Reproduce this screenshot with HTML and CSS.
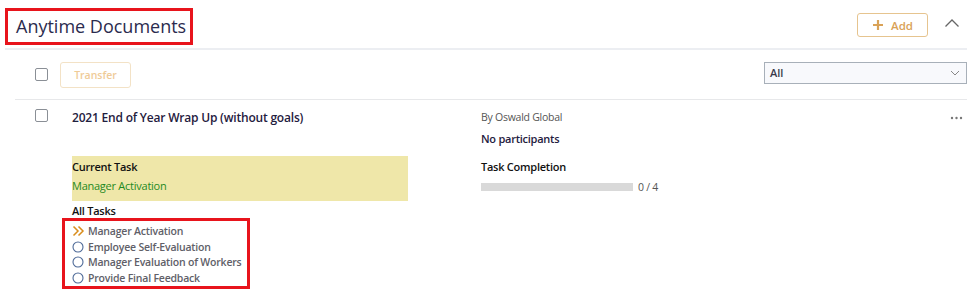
FILE: index.html
```html
<!DOCTYPE html>
<html lang="en">
<head>
<meta charset="utf-8">
<title>Anytime Documents</title>
<link rel="stylesheet" href="styles.css">
</head>
<body>
<div class="panel">
  <header class="panel-header">
    <h1 class="panel-title">Anytime Documents</h1>
    <div class="header-actions">
      <button class="btn-add" type="button">
        <svg class="plus" width="12" height="12" viewBox="0 0 12 12"><path d="M6 1v10M1 6h10" stroke="#d9a257" stroke-width="2.2"/></svg>
        <span>Add</span>
      </button>
      <svg class="collapse" width="16" height="10" viewBox="0 0 16 10"><path d="M1.5 8.5L8 2l6.5 6.5" fill="none" stroke="#666" stroke-width="1.3"/></svg>
    </div>
  </header>

  <div class="toolbar">
    <span class="checkbox"></span>
    <button class="btn-transfer" type="button" disabled>Transfer</button>
    <div class="select">
      <span>All</span>
      <svg width="10" height="6" viewBox="0 0 10 6"><path d="M1 1l4 4 4-4" fill="none" stroke="#888" stroke-width="1"/></svg>
    </div>
  </div>

  <div class="doc-row">
    <span class="checkbox row-check"></span>
    <div class="doc-grid">
      <div class="doc-title">2021 End of Year Wrap Up (without goals)</div>
      <div class="doc-meta">
        <div class="by">By Oswald Global</div>
        <div class="participants">No participants</div>
      </div>

      <div class="current-task">
        <div class="label">Current Task</div>
        <div class="task-name">Manager Activation</div>
      </div>
      <div class="completion">
        <div class="label">Task Completion</div>
        <div class="progress-line">
          <div class="progress"><div class="progress-fill" style="width:0%"></div></div>
          <span class="count">0 / 4</span>
        </div>
      </div>

      <div class="all-tasks">
        <div class="label all-label">All Tasks</div>
        <ul class="task-list">
          <li><svg class="ico" width="13" height="12" viewBox="0 0 13 12"><path d="M1.5 1.5L6 6l-4.5 4.5M6.5 1.5L11 6l-4.5 4.5" fill="none" stroke="#d98d1c" stroke-width="1.5"/></svg>Manager Activation</li>
          <li><svg class="ico" width="13" height="12" viewBox="0 0 13 12"><circle cx="6" cy="6" r="5" fill="none" stroke="#4e6a98" stroke-width="1.1"/></svg>Employee Self-Evaluation</li>
          <li><svg class="ico" width="13" height="12" viewBox="0 0 13 12"><circle cx="6" cy="6" r="5" fill="none" stroke="#4e6a98" stroke-width="1.1"/></svg>Manager Evaluation of Workers</li>
          <li><svg class="ico" width="13" height="12" viewBox="0 0 13 12"><circle cx="6" cy="6" r="5" fill="none" stroke="#4e6a98" stroke-width="1.1"/></svg>Provide Final Feedback</li>
        </ul>
      </div>
    </div>
    <svg class="more" width="13" height="4" viewBox="0 0 13 4"><circle cx="2" cy="2" r="1.2" fill="#777"/><circle cx="6.5" cy="2" r="1.2" fill="#777"/><circle cx="11" cy="2" r="1.2" fill="#777"/></svg>
  </div>
</div>
</body>
</html>
```

FILE: styles.css
```css
* { box-sizing: border-box; }
html, body { margin: 0; padding: 0; background: #fff; }
body {
  font-family: "Open Sans", "Noto Sans", sans-serif;
  color: #1f2040;
  width: 975px;
  height: 297px;
  overflow: hidden;
}
.panel { padding: 0 8px 0 5px; }

.panel-header {
  display: flex;
  align-items: flex-start;
  justify-content: space-between;
  height: 50px;
  border-bottom: 2px solid #eceef2;
}
.panel-title {
  margin: 8px 0 0 0;
  width: 188px;
  height: 37px;
  border: 3px solid #e8141c;
  padding-left: 8px;
  font-weight: 400;
  font-size: 18px;
  line-height: 30px;
  color: #2b2b4e;
  white-space: nowrap;
}
.header-actions {
  display: flex;
  align-items: center;
  margin-top: 13px;
  gap: 16px;
  padding-right: 7px;
}
.btn-add {
  display: flex;
  align-items: center;
  justify-content: center;
  gap: 7px;
  width: 71px;
  height: 24px;
  background: #fff;
  border: 1px solid #e6c48f;
  border-radius: 3px;
  color: #d9a257;
  font-family: inherit;
  font-weight: 600;
  font-size: 11.5px;
  padding: 0;
}
.collapse { display: block; margin-top: -4px; }

.toolbar {
  display: flex;
  align-items: center;
  height: 50px;
  margin-left: 10px;
  padding-left: 20px;
  border-bottom: 1px solid #e7e8ea;
}
.checkbox {
  display: inline-block;
  width: 13px;
  height: 13px;
  border: 1px solid #8a8f96;
  border-radius: 2px;
  background: #fff;
}
.btn-transfer {
  margin-left: 12px;
  width: 71px;
  height: 26px;
  background: #fff;
  border: 1px solid #f3e2c6;
  border-radius: 3px;
  color: #efcb98;
  font-family: inherit;
  font-weight: 600;
  font-size: 10.5px;
  padding: 0;
}
.select {
  margin-left: auto;
  width: 203px;
  height: 22px;
  display: flex;
  align-items: center;
  justify-content: space-between;
  padding: 0 6px 0 5px;
  border: 1px solid #a8b0b9;
  background: #f8f9fc;
  font-size: 11px;
  font-weight: 600;
  color: #3a3a4a;
  margin-top: -4px;
}

.doc-row {
  position: relative;
  display: flex;
  align-items: flex-start;
  margin-left: 10px;
  padding-left: 20px;
  padding-top: 9px;
}
.row-check { flex: none; }
.doc-grid {
  margin-left: 24px;
  display: grid;
  grid-template-columns: 409px 300px;
  font-size: 11px;
  letter-spacing: -0.25px;
}
.doc-title {
  font-size: 12px;
  font-weight: 600;
  line-height: 18px;
  color: #1f2040;
  letter-spacing: -0.2px;
}
.doc-meta { line-height: 16px; }
.by { color: #555; font-size: 10.5px; }
.participants { margin-top: 6px; font-weight: 600; color: #1f2040; }

.label { font-weight: 600; color: #111; line-height: 16px; }
.current-task {
  margin-top: 9px;
  width: 336px;
  height: 45px;
  background: #efe7a9;
  padding-top: 3px;
}
.task-name { margin-top: 3px; color: #1f8a1f; line-height: 16px; font-weight: 400; }
.completion { margin-top: 12px; }
.progress-line { display: flex; align-items: center; gap: 5px; margin-top: 6px; }
.progress { width: 152px; height: 8px; background: #d9d9d9; }
.progress-fill { height: 100%; background: #4a9a4a; }
.count { font-size: 10.5px; color: #555; line-height: 12px; }

.all-tasks { grid-column: 1 / 2; margin-top: 3px; }
.all-label { line-height: 14px; }
.task-list {
  list-style: none;
  margin: 0 0 0 -10px;
  width: 188px;
  height: 71px;
  border: 3px solid #e8141c;
  padding: 2.5px 0 0 7px;
}
.task-list li {
  display: flex;
  align-items: center;
  gap: 3px;
  height: 15.5px;
  font-weight: 600;
  color: #606068;
  font-size: 10.5px;
  letter-spacing: -0.2px;
  white-space: nowrap;
}
.ico { flex: none; }

.more {
  position: absolute;
  right: 4px;
  top: 16px;
}
```
